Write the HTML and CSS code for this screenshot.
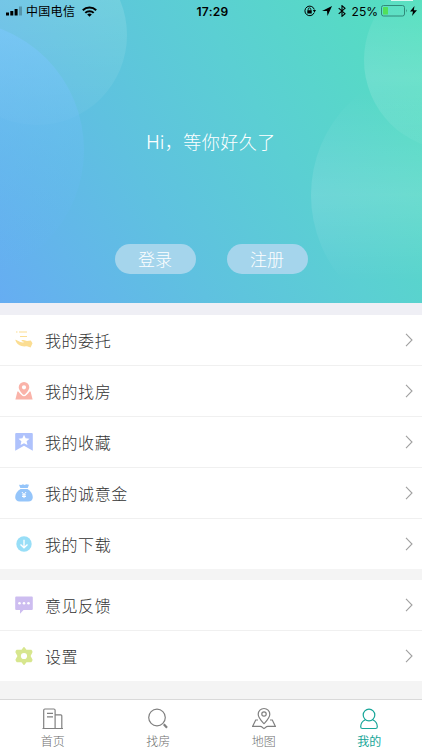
FILE: index.html
```html
<!DOCTYPE html>
<html lang="zh-CN">
<head>
<meta charset="utf-8">
<title>我的</title>
<link rel="stylesheet" href="styles.css">
</head>
<body>
<div class="app">
  <header class="hero">
    <svg class="hero-bg" viewBox="0 0 422 303" aria-hidden="true">
      <defs>
        <linearGradient id="a" x1="0" y1="0" x2="0" y2="1"><stop offset="0" stop-color="#7cc8fb" stop-opacity=".65"/><stop offset=".5" stop-color="#6cbdf4" stop-opacity=".35"/><stop offset=".85" stop-color="#66b6f4" stop-opacity=".12"/><stop offset="1" stop-color="#66b6f4" stop-opacity="0"/></linearGradient>
        <linearGradient id="b" x1="0" y1="0" x2="0" y2="1"><stop offset=".3" stop-color="#fff" stop-opacity=".13"/><stop offset="1" stop-color="#fff" stop-opacity=".03"/></linearGradient>
        <linearGradient id="c" x1="0" y1="0" x2="0" y2="1"><stop offset=".1" stop-color="#fff" stop-opacity=".02"/><stop offset=".6" stop-color="#fff" stop-opacity=".14"/><stop offset="1" stop-color="#fff" stop-opacity=".03"/></linearGradient>
        <linearGradient id="d" x1="0" y1="0" x2="0" y2="1"><stop offset=".1" stop-color="#fff" stop-opacity="0"/><stop offset=".5" stop-color="#fff" stop-opacity=".12"/><stop offset=".83" stop-color="#fff" stop-opacity="0"/></linearGradient>
      </defs>
      <circle cx="37" cy="35" r="90" fill="url(#b)"/>
      <circle cx="-46" cy="150" r="130" fill="url(#a)"/>
      <circle cx="454" cy="60" r="90" fill="url(#c)"/>
      <circle cx="441" cy="195" r="130" fill="url(#d)"/>
      <rect x="391" width="22" height="1" fill="#fff" opacity=".8"/>
    </svg>
    <div class="status">
      <div class="status-side">
        <svg class="signal" width="17" height="10" viewBox="0 0 17 10"><path d="M0 6.500h3V9.500H0zM4.300 5h3v4.500h-3zM8.600 3h3v6.500h-3z"/><path d="M13 .5h3v9h-3z" opacity=".25"/></svg>
        <span class="carrier">中国电信</span>
        <svg class="wifi" width="15" height="11" viewBox="0 0 15 11"><g fill="none" stroke="#000" stroke-width="2"><path d="M.8 4.200a9.500 9.500 0 0 1 13.400 0M3.300 6.900a6 6 0 0 1 8.400 0"/></g><path d="M7.500 10.800 5.200 8.500a3.300 3.300 0 0 1 4.600 0z"/></svg>
      </div>
      <span class="time">17:29</span>
      <div class="status-side right">
        <svg class="lock" width="12" height="12" viewBox="0 0 12 12"><path d="M10.200 7.600A4.800 4.800 0 1 1 10.300 4.500" fill="none" stroke="#000"/><path d="M8.800 5h3.200l-1.500 2.500zM3.300 5.200h4.400v3.300H3.300z"/><path d="M4.200 5.500V4.200a1.300 1.300 0 0 1 2.600 0v1.300" fill="none" stroke="#000" stroke-width=".8"/></svg>
        <svg class="arrow" width="10" height="10" viewBox="0 0 10 10"><path d="M10 0 5.500 10 5 5H0z"/></svg>
        <svg class="bt" width="8" height="12" viewBox="0 0 8 12"><path d="m.7 3.200 6.300 5.500L4 11.300V.7l3 2.600L.7 8.800" fill="none" stroke="#000" stroke-width="1.100"/></svg>
        <span class="percent">25%</span>
        <svg class="battery" width="27" height="12" viewBox="0 0 27 12"><rect x=".5" y=".5" width="23" height="10.500" rx="2" fill="none" stroke="#2c7f72" stroke-width=".9"/><rect x="2" y="2" width="5" height="7.500" rx=".5" fill="#51df5a"/><path d="M25 4q1.500 1.700 0 3.500z" fill="#2c7f72"/></svg>
        <svg class="bolt" width="7" height="10" viewBox="0 0 7 10"><path d="M4.500 0 0 5.500h3L2 10l5-5.800H3.800z"/></svg>
      </div>
    </div>
    <p class="greeting">Hi，等你好久了</p>
    <div class="actions"><a class="pill">登录</a><a class="pill">注册</a></div>
  </header>

  <ul class="menu">
    <li class="row"><svg class="icon" viewBox="0 0 18 18" fill="#fbdd92"><path d="M4 .5h8v1H4zM1 .5h1.500v1H1zM5 5h7v1H5zM.2 8.800c2 .2 3 1.500 5 2.200 1.500.5 3 .5 4 .3-.3-.8-2.400-.6-2.700-1.500-.1-.9 1-1.100 2.100-.7l3.400 1 3.800-.5 1.700 2.700-1.900 4.200-3.600-1.200c-2 .2-4 .2-5.500-.2C3.800 14.500 1 12 .2 8.800z"/></svg><span class="label">我的委托</span><svg class="chev" viewBox="0 0 8 14"><path d="m1 .8 6 6.200-6 6.200"/></svg></li>
    <li class="row"><svg class="icon" viewBox="0 0 18 18" fill="#fab3a9"><path fill-rule="evenodd" d="M9 0a5.300 5.300 0 0 1 5.300 5.300C14.300 8.500 10 13 9 13S3.700 8.500 3.700 5.300A5.300 5.300 0 0 1 9 0zm0 3.200a2.100 2.100 0 1 0 0 4.200 2.100 2.100 0 0 0 0-4.200z"/><path d="M3.400 9.500C5 12 7.500 14.300 9 14.300s4-2.300 5.600-4.800h1L17.600 17.500H.4L2.400 9.500z"/></svg><span class="label">我的找房</span><svg class="chev" viewBox="0 0 8 14"><path d="m1 .8 6 6.200-6 6.200"/></svg></li>
    <li class="row"><svg class="icon" viewBox="0 0 18 18"><path fill="#afc2fc" d="M1.200 0h15.600q1 0 1 1v16.700L9 12.800.2 17.700V1q0-1 1-1z"/><path fill="#fff" d="m9 1.700 1.600 3.600 3.900.4-2.900 2.600.8 3.800L9 10.200l-3.400 1.900.8-3.800-2.900-2.600 3.900-.4z"/></svg><span class="label">我的收藏</span><svg class="chev" viewBox="0 0 8 14"><path d="m1 .8 6 6.200-6 6.200"/></svg></li>
    <li class="row"><svg class="icon" viewBox="0 0 18 18"><path fill="#95c5fa" d="M4 .8 6.300 1 8 .3l1.500.6L11.300.3l2.700.5L12.700 4H5.300zM5.500 5h7c3 2 5.300 4.500 5.300 8.300 0 2.800-1.800 4.200-4.500 4.200H4.700C2 17.500.2 16 .2 13.300.2 9.500 2.500 7 5.500 5z"/><path d="m6.900 8 2.100 2.500L11.100 8M9 10.500v3.600M7 10.900h4M7 12.500h4" fill="none" stroke="#fff"/></svg><span class="label">我的诚意金</span><svg class="chev" viewBox="0 0 8 14"><path d="m1 .8 6 6.200-6 6.200"/></svg></li>
    <li class="row"><svg class="icon" viewBox="0 0 18 18"><circle cx="9" cy="9" r="7.700" fill="#98def7"/><path d="M9 4.800v8M5.500 9.500 9 12.800l3.500-3.300" fill="none" stroke="#fff" stroke-width="1.300"/></svg><span class="label">我的下载</span><svg class="chev" viewBox="0 0 8 14"><path d="m1 .8 6 6.200-6 6.200"/></svg></li>
  </ul>

  <ul class="menu second">
    <li class="row"><svg class="icon" viewBox="0 0 18 18"><path fill="#cdbdf0" d="M1.200.5h15.600q1 0 1 1V13q0 1-1 1H8.500L5 17.700V14H1.200q-1 0-1-1V1.500q0-1 1-1z"/><g fill="#fff"><circle cx="4.500" cy="7.300" r="1.300"/><circle cx="9" cy="7.300" r="1.300"/><circle cx="13.500" cy="7.300" r="1.300"/></g></svg><span class="label">意见反馈</span><svg class="chev" viewBox="0 0 8 14"><path d="m1 .8 6 6.200-6 6.200"/></svg></li>
    <li class="row"><svg class="icon" viewBox="0 0 18 18"><path fill="#d7e68e" stroke="#d7e68e" stroke-width="1.500" stroke-linejoin="round" d="m9 .8 2 2.700 4.900-.1q1 .7.800 1.700L14.800 9l2 3.800q-.2 1.200-1 1.800l-4.700-.1L9 17.200l-2.100-2.700-4.700.1q-.9-.6-1-1.800L3.200 9l-2-3.900q-.1-1 .9-1.700l4.900.1z"/><circle cx="9" cy="9" r="3.100" fill="#fff"/></svg><span class="label">设置</span><svg class="chev" viewBox="0 0 8 14"><path d="m1 .8 6 6.200-6 6.200"/></svg></li>
  </ul>

  <nav class="tabs">
    <a class="tab"><svg width="24" height="24" viewBox="0 0 24 24"><path d="M1.500 21.500h20.500M2.700 21.500V3.200q0-1.200 1.200-1.200h9q1.200 0 1.200 1.200v18.300M14.100 7.800h5.700q1 0 1 1v12.700M6 6.300h6M6 9.800h6"/></svg><span>首页</span></a>
    <a class="tab"><svg width="24" height="24" viewBox="0 0 24 24"><circle cx="11" cy="10.500" r="8.300"/><path d="m17.800 17.300 3.200 3.500" stroke-width="2.200"/></svg><span>找房</span></a>
    <a class="tab"><svg width="24" height="24" viewBox="0 0 24 24"><path d="M12 16.700C10 14.500 6.200 11 6.200 7.300a5.800 5.800 0 0 1 11.600 0c0 3.700-3.800 7.200-5.800 9.400z"/><circle cx="12" cy="7" r="2.200"/><path d="M6 13H3.700L.7 19.300h7.500q1.300 0 2 .9l1.800 1.400 1.800-1.400q.7-.9 2-.9h7.500l-3-6.300H18"/></svg><span>地图</span></a>
    <a class="tab active"><svg width="24" height="24" viewBox="0 0 24 24"><circle cx="12" cy="8" r="5.800"/><path d="M8.500 12.700c-3 1.300-4.800 4-4.800 7q0 1.800 1.700 1.800h13.200q1.700 0 1.700-1.800c0-3-1.800-5.700-4.800-7"/></svg><span>我的</span></a>
  </nav>
</div>
</body>
</html>
```

FILE: styles.css
```css
* { box-sizing: border-box; }
body { margin: 0; font-family: "Inter", "Noto Sans CJK SC", sans-serif; font-weight: 300; }
.app { width: 422px; height: 750px; background: #f4f4f4; display: flex; flex-direction: column; overflow: hidden; }
ul, p { margin: 0; padding: 0; list-style: none; }

.hero { position: relative; z-index: 1; height: 303px; flex: none; background: linear-gradient(60deg, #66adf2 0%, #5fc1e0 35%, #5bcfd3 62%, #54e0be 100%); display: flex; flex-direction: column; align-items: center; }
.hero-bg { position: absolute; inset: 0; width: 422px; height: 303px; }
.status { position: relative; width: 100%; height: 22px; display: grid; grid-template-columns: 1fr auto 1fr; align-items: center; padding: 0 5px 0 6px; color: #000; font-weight: 400; }
.status-side { display: flex; align-items: center; }
.right { justify-content: flex-end; }
.carrier { font-size: 12px; line-height: 18px; padding-top: 1px; margin-left: 3px; letter-spacing: .3px; }
.wifi { margin-left: 7px; }
.time { font-size: 12px; font-weight: 600; letter-spacing: .3px; padding-left: 2px; }
.arrow { margin-left: 6px; }
.bt { margin-left: 6px; }
.percent { font-size: 12px; margin-left: 6px; }
.battery { margin-left: 3px; }
.bolt { margin-left: 2px; }
.greeting { position: relative; margin-top: 107px; height: 28px; line-height: 28px; font-size: 18px; letter-spacing: .5px; color: #fff; }
.actions { position: relative; margin-top: 87px; display: flex; gap: 31px; }
.pill { width: 81px; height: 30px; border-radius: 15px; background: #a5d5ec; color: #fff; font-size: 17px; line-height: 32px; text-align: center; }

.menu { margin-top: 12px; background: #fff; flex: none; box-shadow: 0 -12px #efeff5; }
.menu.second { margin-top: 11px; box-shadow: none; }
.row { height: 51px; border-bottom: 1px solid #f0f0f0; display: flex; align-items: center; padding: 0 9px 0 15px; }
.row:last-child { height: 50px; border-bottom: 0; }
.icon { width: 18px; height: 18px; flex: none; }
.label { flex: 1; margin-left: 12px; padding-bottom: 1px; font-size: 16px; letter-spacing: .55px; color: #333; }
.chev { width: 8px; height: 14px; fill: none; stroke: #a0a0a0; stroke-width: 1.1; }

.tabs { margin-top: auto; height: 51px; flex: none; background: #fff; border-top: 1px solid #d9d9d9; display: grid; grid-template-columns: repeat(4, 1fr); }
.tab { display: flex; flex-direction: column; align-items: center; padding-top: 7px; color: #808080; font-size: 12px; line-height: 16px; }
.tab svg { fill: none; stroke: currentColor; stroke-width: 1.2; flex: none; }
.tab span { margin-top: 3px; color: #6e6e6e; }
.active, .active span { color: #16a598; }
.active span { font-weight: 400; }
```
